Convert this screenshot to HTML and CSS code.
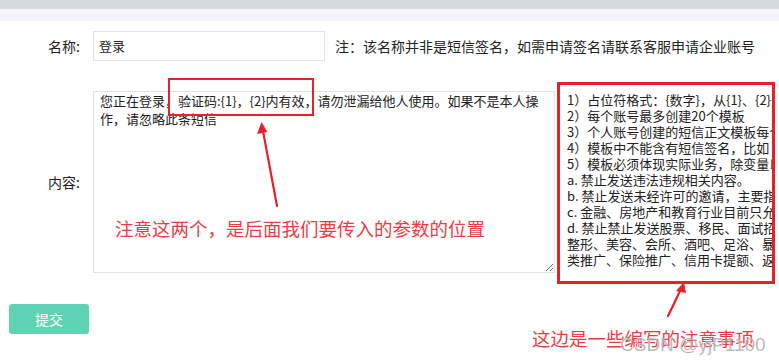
FILE: index.html
```html
<!DOCTYPE html>
<html lang="zh-CN">
<head>
<meta charset="utf-8">
<title>短信模板</title>
<link rel="stylesheet" href="styles.css">
</head>
<body>
<div class="topbar"></div>
<div class="subbar"></div>
<main class="form">
  <div class="row row-name">
    <label class="label">名称:</label>
    <div class="input">登录</div>
    <span class="note">注：该名称并非是短信签名，如需申请签名请联系客服申请企业账号</span>
  </div>
  <div class="row row-content">
    <label class="label">内容:</label>
    <textarea class="content" readonly>您正在登录，验证码:{1}，{2}内有效，请勿泄漏给他人使用。如果不是本人操作，请忽略此条短信</textarea>
    <div class="rules">
      <div>1）占位符格式：{数字}，从{1}、{2}开始依次递增</div>
      <div>2）每个账号最多创建20个模板</div>
      <div>3）个人账号创建的短信正文模板每个变量长度不超过</div>
      <div>4）模板中不能含有短信签名，比如【xx】</div>
      <div>5）模板必须体现实际业务，除变量以外的内容</div>
      <div>a. 禁止发送违法违规相关内容。</div>
      <div>b. 禁止发送未经许可的邀请，主要指邀请注册</div>
      <div>c. 金融、房地产和教育行业目前只允许发送验证</div>
      <div>d. 禁止禁止发送股票、移民、面试招聘、博彩</div>
      <div>整形、美容、会所、酒吧、足浴、暴力、恐吓</div>
      <div>类推广、保险推广、信用卡提额、返现返利</div>
    </div>
  </div>
  <button class="submit" type="button">提交</button>
</main>

<div class="mark mark-params"></div>
<div class="mark mark-rules"></div>
<svg class="arrows" width="779" height="364" viewBox="0 0 779 364">
  <g stroke="#e8202a" stroke-width="2.2" fill="none" stroke-linecap="round">
    <line x1="277" y1="206" x2="263" y2="131"/>
    <line x1="668" y1="316" x2="681" y2="289"/>
  </g>
  <g fill="#e8202a">
    <polygon points="261.5,122 257,134 267.5,132"/>
    <polygon points="684,282 676,291 686,293"/>
  </g>
</svg>
<div class="callout callout-params">注意这两个，是后面我们要传入的参数的位置</div>
<div class="callout callout-rules">这边是一些编写的注意事项</div>
<div class="watermark">CSDN @yjP1100</div>
</body>
</html>
```

FILE: styles.css
```css
* { box-sizing: border-box; }

html, body {
  margin: 0;
  padding: 0;
  width: 779px;
  height: 364px;
  overflow: hidden;
  background: #ffffff;
  font-family: "Noto Sans CJK SC", "Liberation Sans", sans-serif;
  color: #222;
}

.topbar {
  height: 9px;
  background: #d5dbdf;
}

.subbar {
  height: 12px;
  background: #f3f5f9;
}

.form {
  padding: 10px 0 0 9px;
}

.row {
  display: grid;
  column-gap: 13px;
  justify-content: start;
}

.row-name {
  grid-template-columns: 71px 232px max-content;
  align-items: center;
  height: 30px;
}

.row-content {
  grid-template-columns: 71px 462px 215px;
  margin-top: 30px;
  align-items: start;
}

.label {
  font-size: 14px;
  text-align: right;
  line-height: 18px;
}

.input {
  width: 232px;
  height: 30px;
  border: 1px solid #e2e2e2;
  font-size: 13px;
  line-height: 28px;
  padding-left: 5px;
}

.note {
  font-size: 14px;
  line-height: 18px;
  margin-left: -3px;
  white-space: nowrap;
}

.row-content .label {
  align-self: center;
}

.content {
  display: block;
  width: 462px;
  height: 182px;
  margin: 0;
  border: 1px solid #e2e2e2;
  padding: 0 6px;
  font-family: "Noto Sans CJK SC", "Liberation Sans", sans-serif;
  font-size: 13px;
  line-height: 18px;
  color: #222;
  resize: both;
  outline: none;
  background: #fff;
}

.rules {
  width: 215px;
  margin-left: -9px;
  padding: 1px 0 0 8px;
  font-size: 13px;
  line-height: 16px;
  white-space: nowrap;
  overflow: hidden;
}

.submit {
  display: block;
  margin-top: 31px;
  width: 80px;
  height: 30px;
  border: 0;
  border-radius: 3px;
  background: #60d3b4;
  color: #fff;
  font-family: "Noto Sans CJK SC", sans-serif;
  font-size: 14px;
  padding: 0;
}

/* annotation overlays */
.mark {
  position: absolute;
  border: 2px solid #e8202a;
}

.mark-params {
  left: 168px;
  top: 78px;
  width: 146px;
  height: 38px;
}

.mark-rules {
  left: 557px;
  top: 82px;
  width: 218px;
  height: 202px;
  border-width: 3px;
}

.arrows {
  position: absolute;
  left: 0;
  top: 0;
  pointer-events: none;
}

.callout {
  position: absolute;
  color: #ef3a44;
  font-size: 18.5px;
  line-height: 22px;
  white-space: nowrap;
}

.callout-params {
  left: 115px;
  top: 217px;
}

.callout-rules {
  left: 532px;
  top: 327px;
}

.watermark {
  position: absolute;
  left: 620px;
  top: 334px;
  font-family: "Liberation Sans", sans-serif;
  font-size: 19px;
  line-height: 22px;
  color: rgba(140, 140, 140, 0.6);
  text-shadow: 0 0 1px rgba(255, 255, 255, 0.8);
  white-space: nowrap;
}
```
